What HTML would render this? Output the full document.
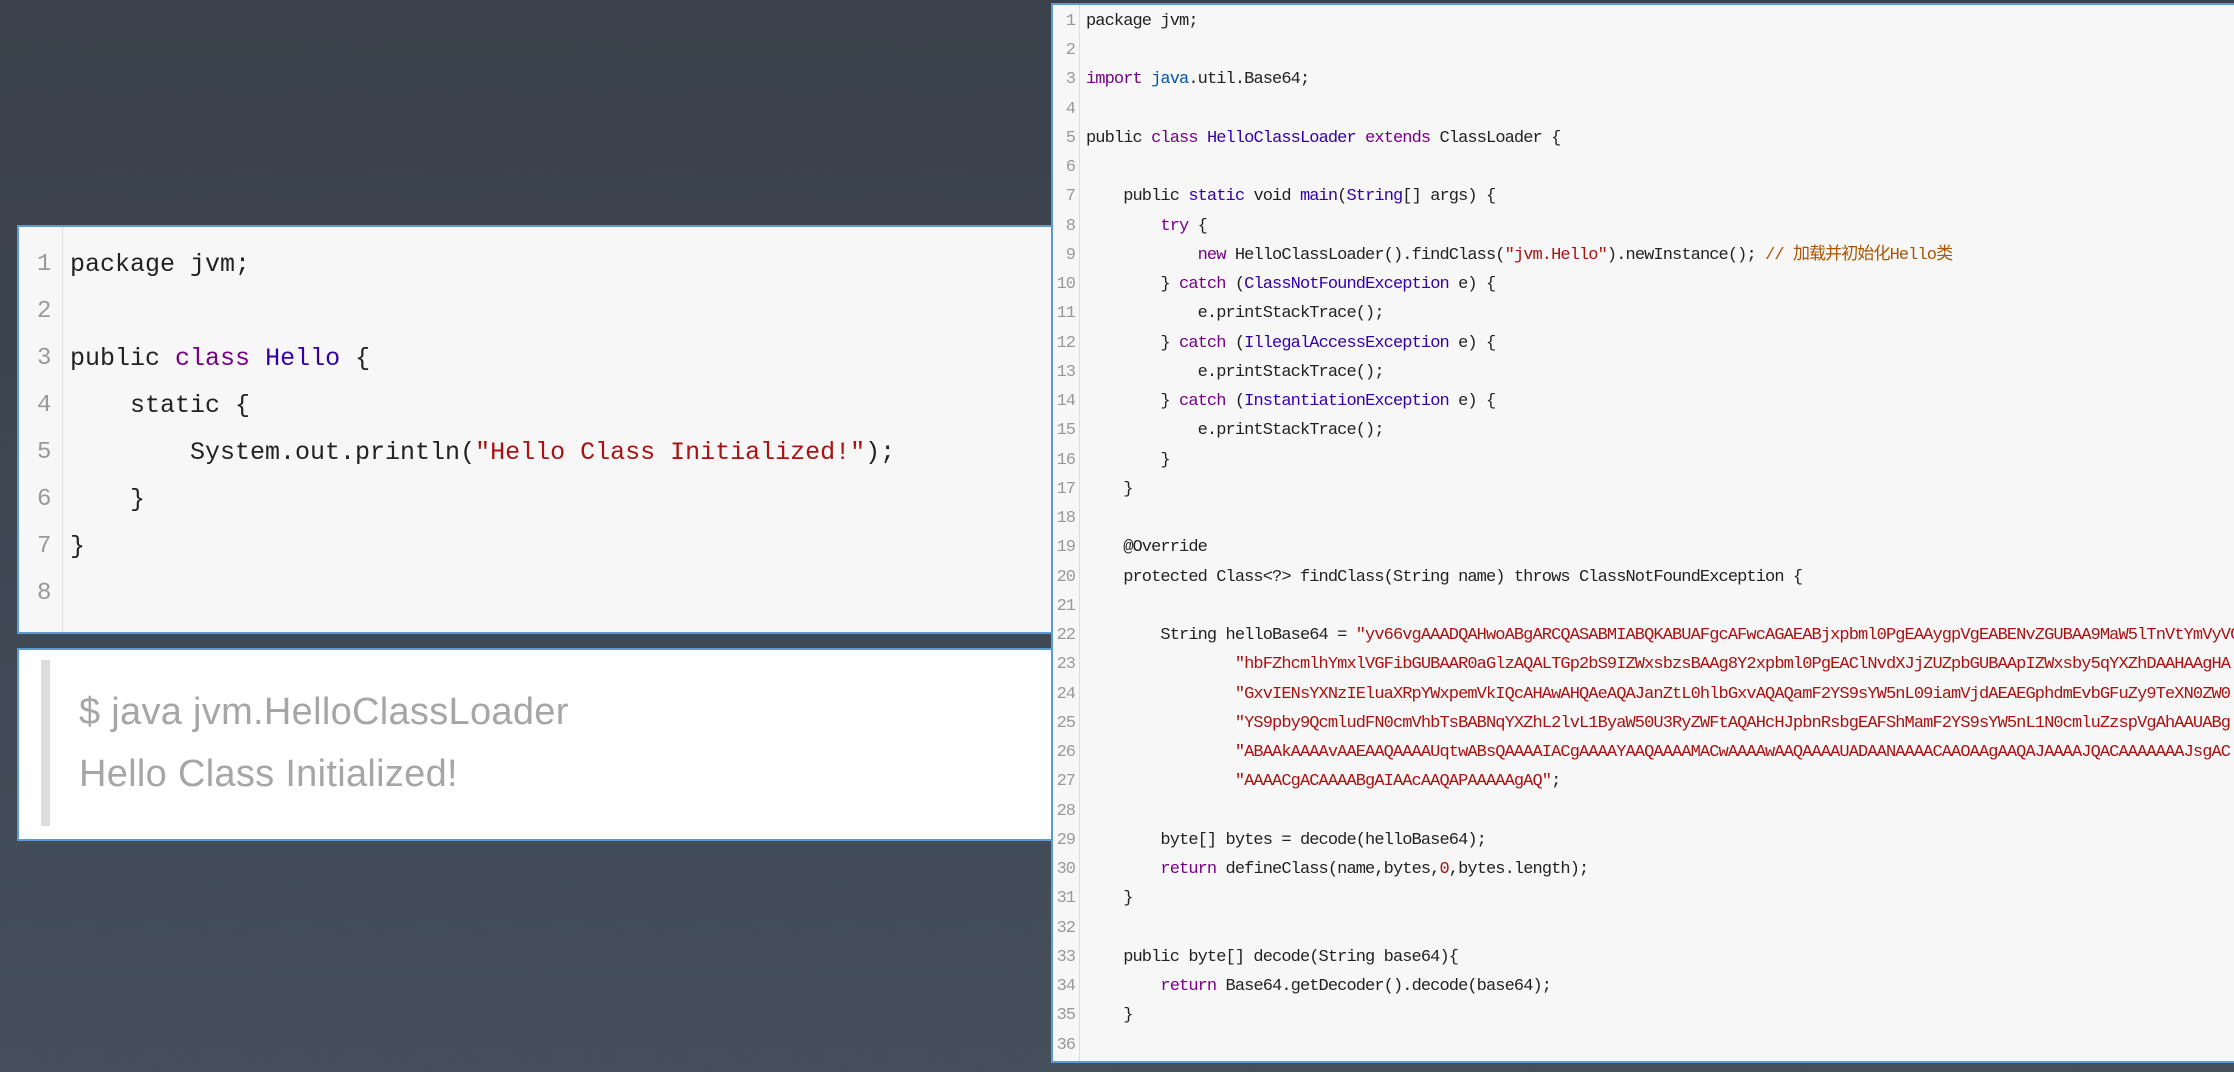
<!DOCTYPE html>
<html><head><meta charset="utf-8"><style>
body{margin:0;width:2234px;height:1072px;overflow:hidden;background:linear-gradient(180deg,#3a414c 0%,#3d4551 40%,#454f5b 100%);position:relative;font-family:"Liberation Mono","Noto Sans CJK SC",monospace}
.box1{position:absolute;left:17px;top:225px;width:1050px;height:409px;background:#f7f7f7;border:2px solid #5b9bd5;box-sizing:border-box}
.box1 .g{position:absolute;left:0;top:0;width:43px;height:100%;border-right:1px solid #ddd}
.box1 .ln{position:absolute;left:18px;width:20px;color:#999;font-size:24px}
.box1 .c{position:absolute;left:51px;font-size:25px;letter-spacing:0px;color:#222;white-space:pre}
.box2{position:absolute;left:17px;top:648px;width:1050px;height:193px;background:#fff;border:2px solid #5b9bd5;box-sizing:border-box}
.bar{position:absolute;left:22px;top:10px;width:9px;height:166px;background:#ddd}
.t{position:absolute;left:60px;font-family:"Liberation Sans",sans-serif;font-size:38px;color:#a6a6a6;letter-spacing:0.3px;white-space:pre}
.box3{position:absolute;left:1051px;top:3px;width:1190px;height:1060px;background:#f7f7f7;border-left:2px solid #5b9bd5;border-top:2px solid #5b9bd5;border-bottom:2px solid #5b9bd5;box-sizing:border-box;overflow:hidden}
.box3 .g{position:absolute;left:0;top:0;width:26px;height:100%;border-right:1px solid #ddd}
.box3 .r{position:absolute;left:0;height:29px;line-height:29px;white-space:pre;font-size:17px;letter-spacing:-0.9px;color:#222}
.box3 .r b{font-weight:normal;display:inline-block;width:22px;text-align:right;color:#999;margin-right:11px;letter-spacing:-1px}
.k{color:#708}.n{color:#30a}.s{color:#a11}.cm{color:#a50}.v{color:#05a}
</style></head><body>
<div class="box1"><div class="g"></div>
<div class="ln" style="top:24px">1</div><div class="c" style="top:23px">package jvm;</div>
<div class="ln" style="top:71px">2</div>
<div class="ln" style="top:118px">3</div><div class="c" style="top:117px">public <span class="k">class</span> <span class="n">Hello</span> {</div>
<div class="ln" style="top:165px">4</div><div class="c" style="top:164px">    static {</div>
<div class="ln" style="top:212px">5</div><div class="c" style="top:211px">        System.out.println(<span class="s">"Hello Class Initialized!"</span>);</div>
<div class="ln" style="top:259px">6</div><div class="c" style="top:258px">    }</div>
<div class="ln" style="top:306px">7</div><div class="c" style="top:305px">}</div>
<div class="ln" style="top:353px">8</div>
</div>
<div class="box2"><div class="bar"></div>
<div class="t" style="top:41px">$ java jvm.HelloClassLoader</div>
<div class="t" style="top:103px">Hello Class Initialized!</div>
</div>
<div class="box3"><div class="g"></div>
<div class="r" style="top:2px"><b>1</b>package jvm;</div>
<div class="r" style="top:31px"><b>2</b></div>
<div class="r" style="top:60px"><b>3</b><span class="k">import</span> <span class="v">java</span>.util.Base64;</div>
<div class="r" style="top:90px"><b>4</b></div>
<div class="r" style="top:119px"><b>5</b>public <span class="k">class</span> <span class="n">HelloClassLoader</span> <span class="k">extends</span> ClassLoader {</div>
<div class="r" style="top:148px"><b>6</b></div>
<div class="r" style="top:177px"><b>7</b>    public <span class="n">static</span> void <span class="n">main</span>(<span class="n">String</span>[] args) {</div>
<div class="r" style="top:207px"><b>8</b>        <span class="k">try</span> {</div>
<div class="r" style="top:236px"><b>9</b>            <span class="k">new</span> HelloClassLoader().findClass(<span class="s">"jvm.Hello"</span>).newInstance(); <span class="cm">// 加载并初始化Hello类</span></div>
<div class="r" style="top:265px"><b>10</b>        } <span class="k">catch</span> (<span class="n">ClassNotFoundException</span> e) {</div>
<div class="r" style="top:294px"><b>11</b>            e.printStackTrace();</div>
<div class="r" style="top:324px"><b>12</b>        } <span class="k">catch</span> (<span class="n">IllegalAccessException</span> e) {</div>
<div class="r" style="top:353px"><b>13</b>            e.printStackTrace();</div>
<div class="r" style="top:382px"><b>14</b>        } <span class="k">catch</span> (<span class="n">InstantiationException</span> e) {</div>
<div class="r" style="top:411px"><b>15</b>            e.printStackTrace();</div>
<div class="r" style="top:441px"><b>16</b>        }</div>
<div class="r" style="top:470px"><b>17</b>    }</div>
<div class="r" style="top:499px"><b>18</b></div>
<div class="r" style="top:528px"><b>19</b>    @Override</div>
<div class="r" style="top:558px"><b>20</b>    protected Class&lt;?&gt; findClass(String name) throws ClassNotFoundException {</div>
<div class="r" style="top:587px"><b>21</b></div>
<div class="r" style="top:616px"><b>22</b>        String helloBase64 = <span class="s">"yv66vgAAADQAHwoABgARCQASABMIABQKABUAFgcAFwcAGAEABjxpbml0PgEAAygpVgEABENvZGUBAA9MaW5lTnVtYmVyVGFibGU</span></div>
<div class="r" style="top:645px"><b>23</b>                <span class="s">"hbFZhcmlhYmxlVGFibGUBAAR0aGlzAQALTGp2bS9IZWxsbzsBAAg8Y2xpbml0PgEAClNvdXJjZUZpbGUBAApIZWxsby5qYXZhDAAHAAgHA</span></div>
<div class="r" style="top:675px"><b>24</b>                <span class="s">"GxvIENsYXNzIEluaXRpYWxpemVkIQcAHAwAHQAeAQAJanZtL0hlbGxvAQAQamF2YS9sYW5nL09iamVjdAEAEGphdmEvbGFuZy9TeXN0ZW0</span></div>
<div class="r" style="top:704px"><b>25</b>                <span class="s">"YS9pby9QcmludFN0cmVhbTsBABNqYXZhL2lvL1ByaW50U3RyZWFtAQAHcHJpbnRsbgEAFShMamF2YS9sYW5nL1N0cmluZzspVgAhAAUABg</span></div>
<div class="r" style="top:733px"><b>26</b>                <span class="s">"ABAAkAAAAvAAEAAQAAAAUqtwABsQAAAAIACgAAAAYAAQAAAAMACwAAAAwAAQAAAAUADAANAAAACAAOAAgAAQAJAAAAJQACAAAAAAAJsgAC</span></div>
<div class="r" style="top:762px"><b>27</b>                <span class="s">"AAAACgACAAAABgAIAAcAAQAPAAAAAgAQ"</span>;</div>
<div class="r" style="top:792px"><b>28</b></div>
<div class="r" style="top:821px"><b>29</b>        byte[] bytes = decode(helloBase64);</div>
<div class="r" style="top:850px"><b>30</b>        <span class="k">return</span> defineClass(name,bytes,<span class="s">0</span>,bytes.length);</div>
<div class="r" style="top:879px"><b>31</b>    }</div>
<div class="r" style="top:909px"><b>32</b></div>
<div class="r" style="top:938px"><b>33</b>    public byte[] decode(String base64){</div>
<div class="r" style="top:967px"><b>34</b>        <span class="k">return</span> Base64.getDecoder().decode(base64);</div>
<div class="r" style="top:996px"><b>35</b>    }</div>
<div class="r" style="top:1026px"><b>36</b></div>
</div>
</body></html>
